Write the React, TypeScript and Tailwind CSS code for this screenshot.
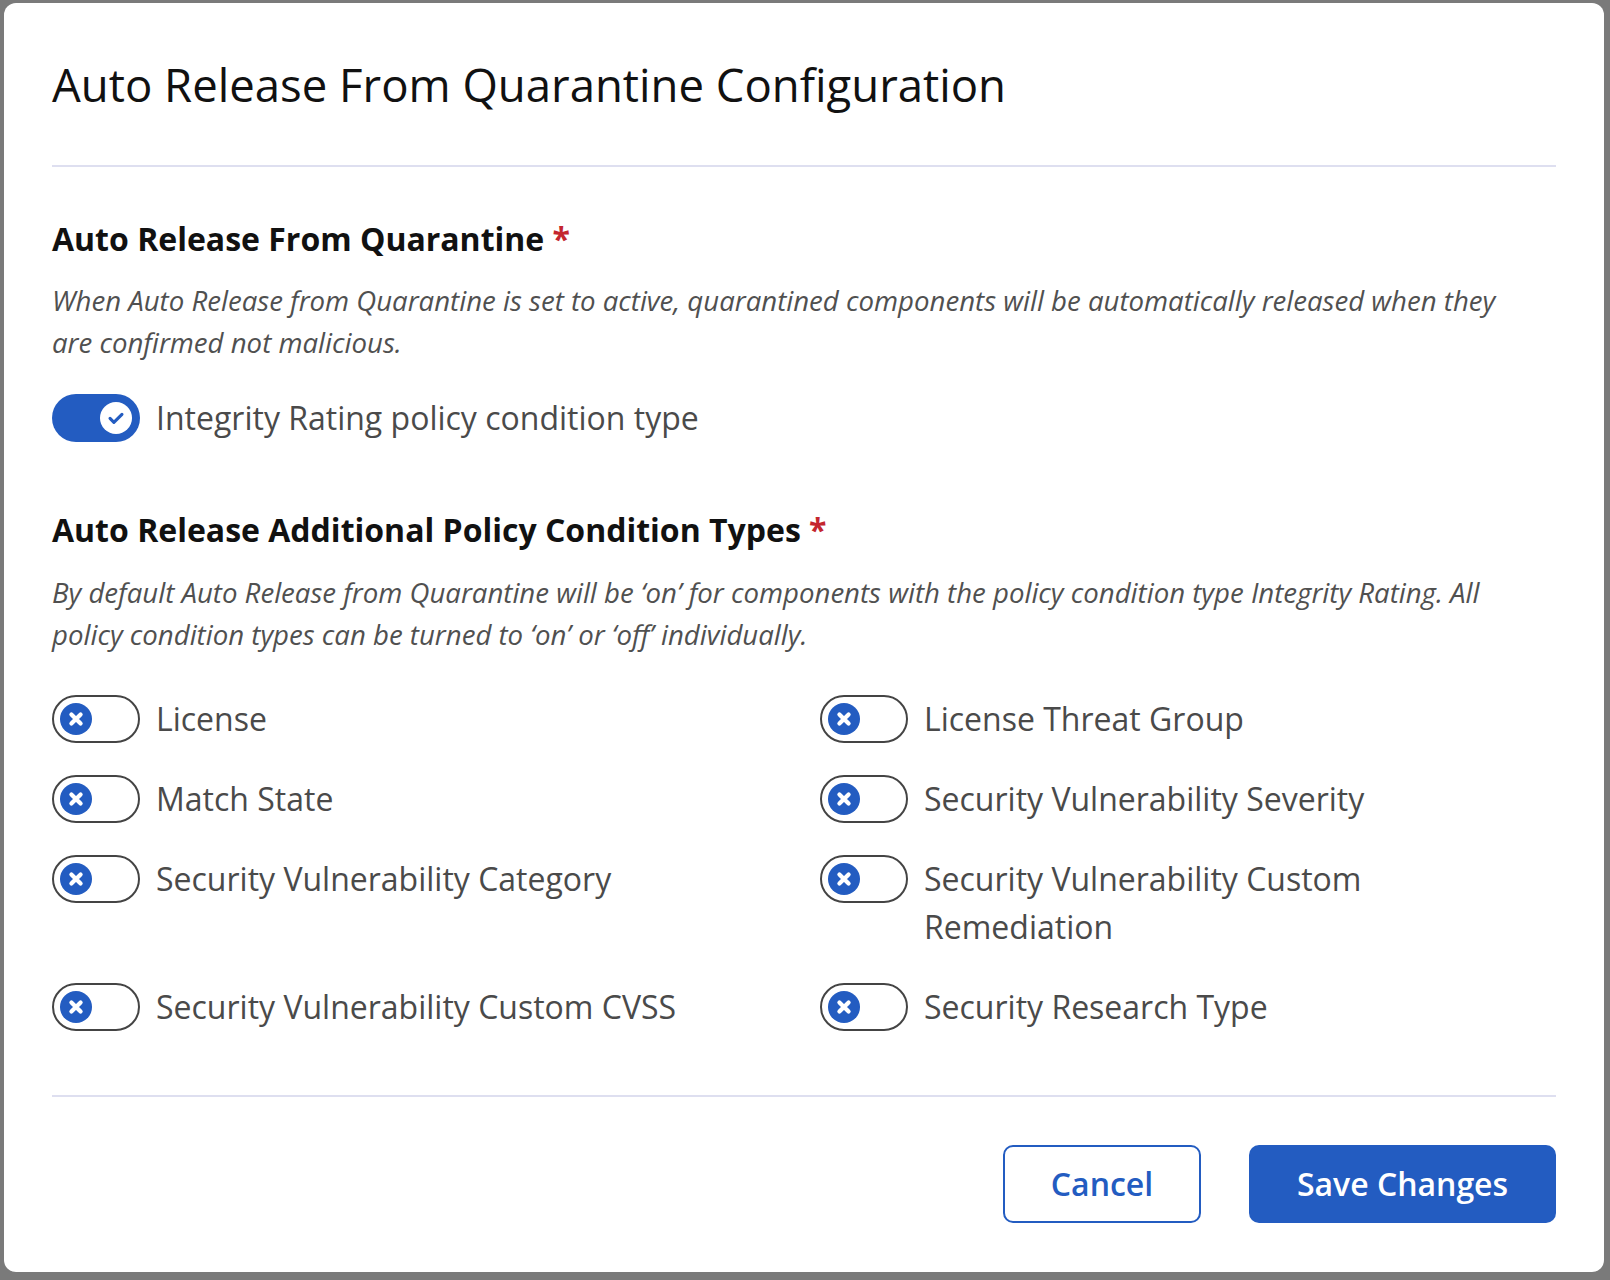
import React, { useState } from "react";

const conditionTypes = [
  { id: "license", label: "License" },
  { id: "licenseThreatGroup", label: "License Threat Group" },
  { id: "matchState", label: "Match State" },
  { id: "svSeverity", label: "Security Vulnerability Severity" },
  { id: "svCategory", label: "Security Vulnerability Category" },
  { id: "svCustomRemediation", label: "Security Vulnerability Custom Remediation" },
  { id: "svCustomCvss", label: "Security Vulnerability Custom CVSS" },
  { id: "securityResearchType", label: "Security Research Type" },
];

const Toggle = ({ on, onClick }: { on: boolean; onClick: () => void }) => {
  if (on) {
    return (
      <button
        onClick={onClick}
        className="flex h-12 w-22 shrink-0 items-center justify-end rounded-full bg-[#235cc1] pr-2"
      >
        <span className="flex h-8 w-8 items-center justify-center rounded-full bg-white">
          <svg viewBox="0 0 24 24" className="h-[22px] w-[22px]" fill="none">
            <path
              d="M5.5 12.5l4.2 4.2L18.5 8"
              stroke="#235cc1"
              strokeWidth="3.4"
              strokeLinecap="round"
              strokeLinejoin="round"
            />
          </svg>
        </span>
      </button>
    );
  }
  return (
    <button
      onClick={onClick}
      className="flex h-12 w-22 shrink-0 items-center justify-start rounded-full border-2 border-[#444444] bg-white pl-[6px]"
    >
      <span className="flex h-8 w-8 items-center justify-center rounded-full bg-[#235cc1]">
        <svg viewBox="0 0 24 24" className="h-[22px] w-[22px]" fill="none">
          <path
            d="M7 7l10 10M17 7L7 17"
            stroke="white"
            strokeWidth="4.6"
            strokeLinecap="round"
          />
        </svg>
      </span>
    </button>
  );
};

const App = () => {
  const [integrity, setIntegrity] = useState(true);
  const [enabled, setEnabled] = useState<Record<string, boolean>>({});

  return (
    <div
      className="min-h-screen w-full bg-[#7a7a7a] pt-[3px] pl-[4px] pr-[6px]"
      style={{ fontFamily: '"Open Sans", "Liberation Sans", sans-serif' }}
    >
      <div className="w-[1600px] rounded-[12px] bg-white px-12 pt-12 pb-[49px]">
        {/* Header */}
        <h1 className="text-[45.5px] leading-[66px] font-normal text-[#111111]">
          Auto Release From Quarantine Configuration
        </h1>
        <div className="mt-12 h-[2px] bg-[#dedff0]" />

        {/* Section 1 */}
        <h2 className="mt-[52px] text-[32px] leading-[40px] font-bold text-[#111111]">
          Auto Release From Quarantine <span className="text-[#c4262e]">*</span>
        </h2>
        <p className="mt-[20px] max-w-[1470px] text-[27.6px] leading-[42px] italic text-[#505050]">
          When Auto Release from Quarantine is set to active, quarantined components will be
          automatically released when they are confirmed not malicious.
        </p>
        <div className="mt-[31px] flex items-center gap-4">
          <Toggle on={integrity} onClick={() => setIntegrity(!integrity)} />
          <span className="text-[32px] leading-[48px] text-[#4a4a4a]">
            Integrity Rating policy condition type
          </span>
        </div>

        {/* Section 2 */}
        <h2 className="mt-[68px] text-[32px] leading-[40px] font-bold text-[#111111]">
          Auto Release Additional Policy Condition Types{" "}
          <span className="text-[#c4262e]">*</span>
        </h2>
        <p className="mt-[21px] max-w-[1470px] text-[27.6px] leading-[42px] italic text-[#505050]">
          By default Auto Release from Quarantine will be ‘on’ for components with the policy
          condition type Integrity Rating. All policy condition types can be turned to ‘on’ or
          ‘off’ individually.
        </p>
        <div className="mt-[40px] grid grid-cols-2 gap-x-8 gap-y-8">
          {conditionTypes.map((c) => (
            <div key={c.id} className="flex items-start gap-4">
              <Toggle
                on={!!enabled[c.id]}
                onClick={() => setEnabled({ ...enabled, [c.id]: !enabled[c.id] })}
              />
              <span className="max-w-[580px] text-[32px] leading-[48px] text-[#4a4a4a]">
                {c.label}
              </span>
            </div>
          ))}
        </div>

        <div className="mt-[64px] h-[2px] bg-[#dedff0]" />

        {/* Footer */}
        <div className="mt-[48px] flex justify-end gap-12">
          <button className="h-[78px] w-[198px] rounded-[10px] border-2 border-[#235cc1] bg-white text-[32px] font-semibold text-[#235cc1]">
            Cancel
          </button>
          <button className="h-[78px] w-[307px] rounded-[10px] bg-[#235cc1] text-[32px] font-semibold text-white">
            Save Changes
          </button>
        </div>
      </div>
    </div>
  );
};

export default App;
